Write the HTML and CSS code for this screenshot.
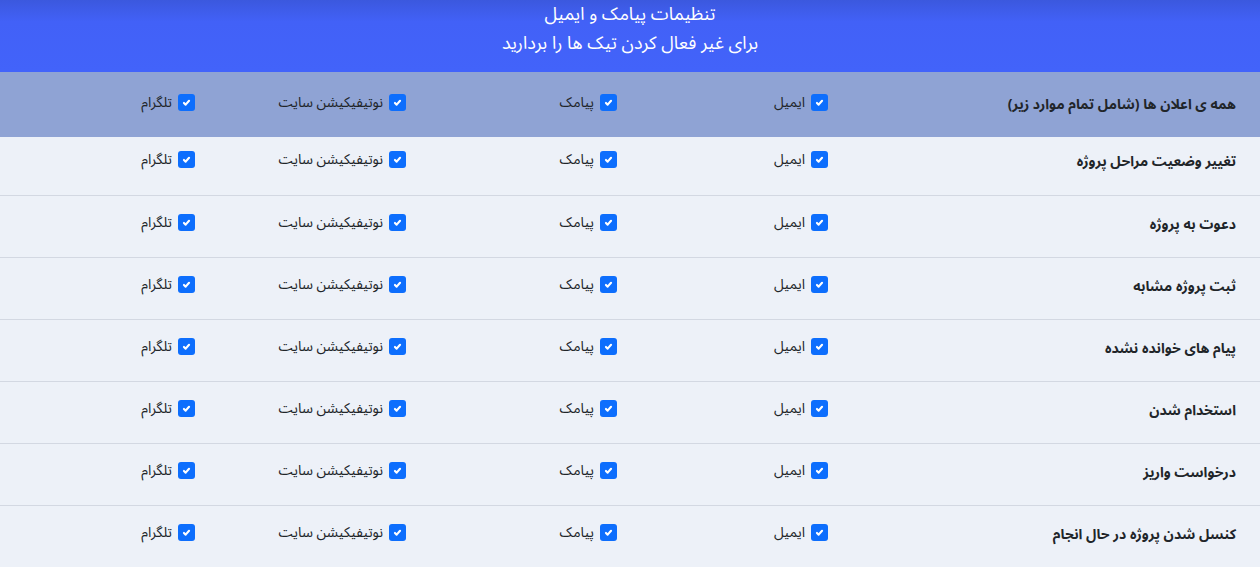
FILE: index.html
```html
<!DOCTYPE html>
<html lang="fa" dir="rtl">
<head>
    <meta charset="UTF-8">
    <meta name="viewport" content="width=device-width, initial-scale=1.0">
    <title>تنظیمات پیامک و ایمیل</title>
    <link rel="stylesheet" href="styles.css">
</head>
<body>

<div class="settings-header">
    <div>تنظیمات پیامک و ایمیل</div>
    <div>برای غیر فعال کردن تیک ها را بردارید</div>
</div>

<table class="settings-table">
    <colgroup>
        <col class="col-title">
        <col class="col-opt">
        <col class="col-opt">
        <col class="col-opt">
        <col class="col-opt">
    </colgroup>
    <thead>
        <tr>
            <th>همه ی اعلان ها (شامل تمام موارد زیر)</th>
            <th><label class="opt"><input type="checkbox" checked> ایمیل</label></th>
            <th><label class="opt"><input type="checkbox" checked> پیامک</label></th>
            <th><label class="opt"><input type="checkbox" checked> نوتیفیکیشن سایت</label></th>
            <th><label class="opt"><input type="checkbox" checked> تلگرام</label></th>
        </tr>
    </thead>
    <tbody id="rows"></tbody>
</table>

<script>
    const items = [
        'تغییر وضعیت مراحل پروژه',
        'دعوت به پروژه',
        'ثبت پروژه مشابه',
        'پیام های خوانده نشده',
        'استخدام شدن',
        'درخواست واریز',
        'کنسل شدن پروژه در حال انجام'
    ];
    const options = ['ایمیل', 'پیامک', 'نوتیفیکیشن سایت', 'تلگرام'];
    const tbody = document.getElementById('rows');

    items.forEach(title => {
        const row = document.createElement('tr');
        let html = `<td class="title">${title}</td>`;
        options.forEach(opt => {
            html += `<td><label class="opt"><input type="checkbox" checked> ${opt}</label></td>`;
        });
        row.innerHTML = html;
        tbody.appendChild(row);
    });
</script>

</body>
</html>
```

FILE: styles.css
```css
body {
    font-family: "Noto Sans Arabic", "DejaVu Sans", sans-serif;
    background-color: #edf1f8;
    margin: 0;
    padding: 0;
    color: #212529;
}
.settings-header {
    background: linear-gradient(to bottom, #3b58de, #4261f7 30%, #4263fa);
    color: #ffffff;
    text-align: center;
    font-size: 18px;
    line-height: 29px;
    height: 72px;
}
.settings-table {
    width: 100%;
    border-collapse: collapse;
    table-layout: fixed;
}
.col-title {
    width: 416px;
}
.col-opt {
    width: 211px;
}
.settings-table th,
.settings-table td {
    text-align: right;
    vertical-align: middle;
    padding: 0 16px 0 0;
    font-size: 14px;
}
.settings-table th:first-child,
.settings-table td.title {
    padding-right: 24px;
    font-weight: bold;
}
.settings-table thead tr {
    background-color: #8fa3d4;
    height: 65px;
}
.settings-table th {
    font-weight: normal;
}
.settings-table tbody tr {
    height: 62px;
    border-bottom: 1px solid #d3d8e2;
}
.settings-table tbody td {
    padding-bottom: 4px;
}
.settings-table tbody tr:first-child {
    height: 58px;
}
.settings-table tbody tr:first-child td {
    padding-bottom: 8px;
}
.settings-table tbody tr:last-child {
    border-bottom: none;
}
.opt {
    display: inline-flex;
    align-items: center;
    gap: 6px;
    cursor: pointer;
}
.opt input {
    appearance: none;
    width: 17px;
    height: 17px;
    margin: 0;
    border-radius: 3px;
    background-color: #0d6efd;
    background-image: url("data:image/svg+xml,%3csvg xmlns='http://www.w3.org/2000/svg' viewBox='0 0 20 20'%3e%3cpath fill='none' stroke='%23fff' stroke-linecap='round' stroke-linejoin='round' stroke-width='2.5' d='M7 10.5l2 2l4-4.5'/%3e%3c/svg%3e");
    background-size: 100% 100%;
}
```
